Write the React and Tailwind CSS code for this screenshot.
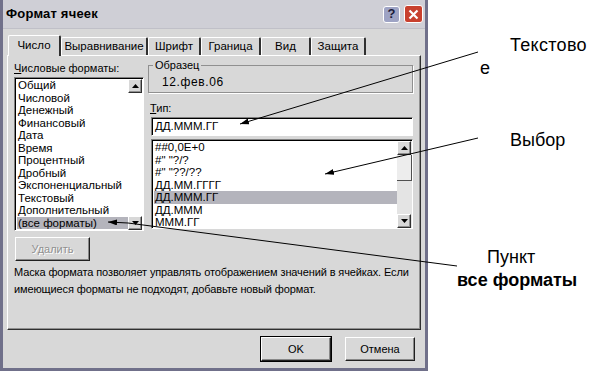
const leftItems = [
  'Общий',
  'Числовой',
  'Денежный',
  'Финансовый',
  'Дата',
  'Время',
  'Процентный',
  'Дробный',
  'Экспоненциальный',
  'Текстовый',
  'Дополнительный',
  '(все форматы)',
]

const rightItems = ['##0,0E+0', '#" "?/?', '#" "??/??', 'ДД.ММ.ГГГГ', 'ДД.МММ.ГГ', 'ДД.МММ', 'МММ.ГГ']

const tabs = [
  { label: 'Число', w: 'w-[53px]' },
  { label: 'Выравнивание', w: 'w-[87px]' },
  { label: 'Шрифт', w: 'w-[53px]' },
  { label: 'Граница', w: 'w-[60px]' },
  { label: 'Вид', w: 'w-[50px]' },
  { label: 'Защита', w: 'w-[55px]' },
]

function ArrowBtn({ up }) {
  return (
    <div className="w-[14px] h-[14px] bg-[#d8d8d8] border border-t-white border-l-white border-b-[#303030] border-r-[#303030] shadow-[inset_-1px_-1px_0_#909090] flex items-center justify-center">
      <svg width="7" height="4" viewBox="0 0 7 4">
        <path d={up ? 'M0 4h7L3.5 0z' : 'M0 0h7L3.5 4z'} fill="#000" />
      </svg>
    </div>
  )
}

function Button({ children, disabled, className = '' }) {
  return (
    <div
      className={`h-[24px] flex items-center justify-center bg-[#d8d8d8] border border-t-white border-l-white border-b-[#202020] border-r-[#202020] shadow-[inset_-1px_-1px_0_#888] text-[11px] ${
        disabled ? 'text-[#909090] [text-shadow:1px_1px_0_#fff]' : 'text-black'
      } ${className}`}
    >
      {children}
    </div>
  )
}

export default function App() {
  return (
    <div className="relative w-[596px] h-[371px] bg-white flex overflow-hidden font-['Liberation_Sans',Arial,sans-serif] text-black">
      {/* dialog */}
      <div className="w-[428px] h-[371px] flex flex-col bg-[#d8d8d8] border-l-[3px] border-r-[3px] border-b-[3px] border-[#70708a]">
        <div className="h-[29px] flex items-center justify-between pl-[3px] pr-[2px] bg-[#cfcfd6] border-b border-[#c0c0c8]">
          <span className="text-[13px] font-bold tracking-[0.2px]">Формат ячеек</span>
          <div className="flex items-center gap-[4px]">
            <div className="w-[17px] h-[17px] rounded-[3px] bg-[#9ea3c4] border border-white flex items-center justify-center text-[13px] font-bold text-[#1a1a3a]">
              ?
            </div>
            <div className="w-[19px] h-[18px] rounded-[3px] bg-[#c8402e] border border-white flex items-center justify-center">
              <svg width="11" height="11" viewBox="0 0 11 11">
                <path d="M1.5 1.5l8 8M9.5 1.5l-8 8" stroke="#fff" strokeWidth="2.2" />
              </svg>
            </div>
          </div>
        </div>

        {/* tabs */}
        <div className="flex items-end pl-[5px] mt-[6px] h-[20px]">
          {tabs.map((t, i) => (
            <div
              key={t.label}
              className={`${t.w} flex items-center justify-center text-[11.5px] border-t border-l border-t-white border-l-white border-r-2 border-r-[#303030] rounded-t-[2px] ${
                i === 0 ? 'h-[21px] bg-[#d8d8d8] relative z-10 -mb-px' : 'h-[18px]'
              }`}
            >
              {t.label}
            </div>
          ))}
        </div>

        {/* panel */}
        <div className="ml-[4px] w-[414px] h-[275px] border border-t-white border-l-white border-b-[#303030] border-r-[#303030] shadow-[inset_-1px_-1px_0_#909090] pt-[5px] pl-[6px]">
          <div className="flex">
            <div className="w-[130px] flex flex-col">
              <div className="h-[15px] text-[11px] leading-[15px]">
                <span className="underline">Ч</span>исловые форматы:
              </div>
              <div className="mt-px h-[154px] w-[130px] bg-white border border-t-[#808080] border-l-[#808080] border-b-white border-r-white shadow-[inset_1px_1px_0_#000] flex pl-[2px] pt-px">
                <div className="flex-1 flex flex-col">
                  {leftItems.map((it, i) => (
                    <div
                      key={it}
                      className={`h-[12.5px] leading-[12.5px] text-[11.5px] pl-px whitespace-nowrap ${
                        i === leftItems.length - 1 ? 'bg-[#b4b4bc]' : ''
                      }`}
                    >
                      {it}
                    </div>
                  ))}
                </div>
                <div className="w-[15px] flex flex-col justify-between bg-white">
                  <ArrowBtn up />
                  <ArrowBtn />
                </div>
              </div>
              <Button disabled className="mt-[6px] ml-px w-[75px]">
                Удалить
              </Button>
            </div>

            <div className="ml-[4px] w-[265px] flex flex-col">
              <div className="mt-[4px] h-[28px] border border-[#909090] shadow-[1px_1px_0_#fff] relative flex items-center pl-[13px] pt-[6px]">
                <span className="absolute -top-[8px] left-[4px] px-[2px] bg-[#d8d8d8] text-[11px] leading-[14px]">Образец</span>
                <span className="text-[12px] tracking-[0.6px]">12.фев.06</span>
              </div>
              <div className="mt-[9px] ml-[2px] h-[13px] text-[11px] leading-[13px]">
                <span className="underline">Т</span>ип:
              </div>
              <div className="mt-[2px] ml-[3px] h-[19px] bg-white border border-t-[#808080] border-l-[#808080] border-b-white border-r-white shadow-[inset_1px_1px_0_#000] flex items-center pl-[3px] text-[11.5px]">
                ДД.МММ.ГГ
              </div>
              <div className="mt-[3px] ml-[3px] h-[90px] bg-white border border-t-[#808080] border-l-[#808080] border-b-white border-r-white shadow-[inset_1px_1px_0_#000] flex pl-[2px] pt-px">
                <div className="flex-1 flex flex-col">
                  {rightItems.map((it, i) => (
                    <div
                      key={it}
                      className={`h-[12.5px] leading-[12.5px] text-[11.5px] pl-px whitespace-nowrap ${
                        i === 4 ? 'bg-[#b4b4bc]' : ''
                      }`}
                    >
                      {it}
                    </div>
                  ))}
                </div>
                <div className="w-[15px] flex flex-col bg-[#e4e4e4]">
                  <ArrowBtn up />
                  <div className="h-[26px] bg-[#ededed] border-b border-r border-[#505050]" />
                  <div className="flex-1" />
                  <ArrowBtn />
                </div>
              </div>
            </div>
          </div>

          <div className="mt-[3px] text-[11px] leading-[17px] whitespace-nowrap tracking-[-0.12px]">
            Маска формата позволяет управлять отображением значений в ячейках. Если
            <br />
            имеющиеся форматы не подходят, добавьте новый формат.
          </div>
        </div>

        <div className="flex justify-end gap-[14px] pr-[10px] mt-[7px]">
          <Button className="w-[70px] outline outline-1 outline-black">OK</Button>
          <Button className="w-[70px]">Отмена</Button>
        </div>
      </div>

      {/* annotations */}
      <div className="flex-1 flex flex-col text-[18px] leading-[23px] pt-[34px]">
        <div className="pl-[82px] tracking-[0.3px]">Текстово</div>
        <div className="pl-[52px]">е</div>
        <div className="pl-[82px] mt-[49px]">Выбор</div>
        <div className="pl-[59px] mt-[94px]">Пункт</div>
        <div className="pl-[29px] font-bold">все форматы</div>
      </div>

      <svg className="absolute inset-0 pointer-events-none" width="596" height="371" viewBox="0 0 596 371">
        <defs>
          <marker id="ah" markerWidth="9" markerHeight="6" refX="9" refY="3" orient="auto" markerUnits="userSpaceOnUse">
            <path d="M0 0L9 3L0 6z" fill="#000" />
          </marker>
        </defs>
        <line x1="478" y1="52" x2="240" y2="124" stroke="#000" strokeWidth="1" markerEnd="url(#ah)" />
        <line x1="478" y1="138" x2="325" y2="174" stroke="#000" strokeWidth="1" markerEnd="url(#ah)" />
        <polyline points="457,266 128,223 108,222" fill="none" stroke="#000" strokeWidth="1" markerEnd="url(#ah)" />
      </svg>
    </div>
  )
}
